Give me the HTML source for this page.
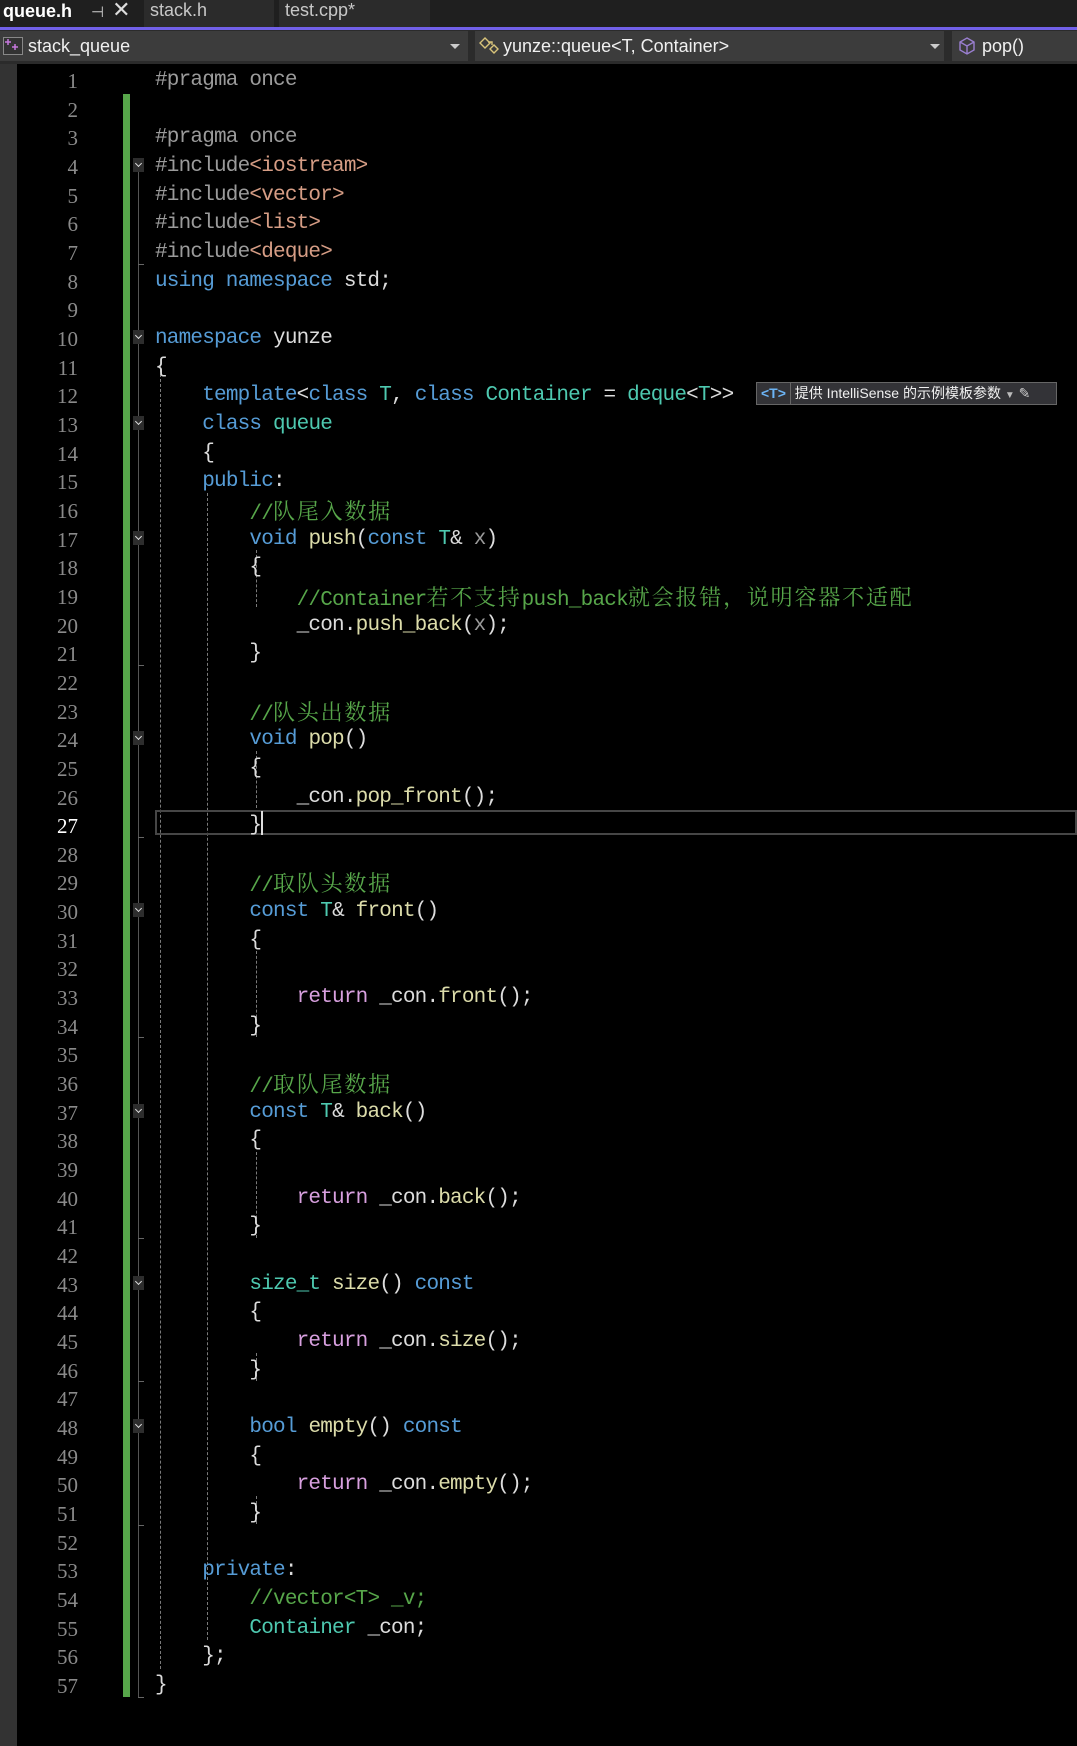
<!DOCTYPE html>
<html><head><meta charset="utf-8"><style>
*{margin:0;padding:0;box-sizing:border-box}
body{width:1077px;height:1746px;background:#000;position:relative;overflow:hidden;font-family:"Liberation Sans","Noto Sans CJK SC",sans-serif}
.abs{position:absolute}
#tabs{left:0;top:0;width:1077px;height:27px;background:#1f1f1f}
.tab{position:absolute;top:0;height:27px;font-size:18px;color:#c8c8c8;line-height:20px;padding-left:6px}
#purple{left:0;top:27px;width:1077px;height:3px;background:#7160e8}
#nav{left:0;top:30px;width:1077px;height:34px;background:#2b2b2b}
.dd{position:absolute;top:1px;height:30px;background:#3c3c3c;color:#f0f0f0;font-size:18px;line-height:30px}
.arr{position:absolute;top:13px;width:0;height:0;border-left:5px solid transparent;border-right:5px solid transparent;border-top:5px solid #ccc}
#strip{left:0;top:64px;width:17px;height:1682px;background:#333}
#code{left:0;top:67px;width:1077px}
.ln{position:absolute;left:17px;width:61px;text-align:right;font-family:"Liberation Serif","Noto Serif CJK SC",serif;font-size:21px;color:#8a8a8a;height:28.66px;line-height:28.66px}
.l{position:absolute;left:155px;white-space:pre;font-family:"Liberation Mono","Noto Serif CJK SC",monospace;font-size:21px;letter-spacing:-0.8px;color:#dcdcdc;height:28.66px;line-height:28.66px}
.c{font-family:"Noto Serif CJK SC","Noto Sans CJK SC",serif;font-size:22px;letter-spacing:1.8px}
.k{color:#569cd6}.t{color:#4ec9b0}.f{color:#dcdcaa}.cm{color:#57a64a}.s{color:#d69d85}.p{color:#9b9b9b}.r{color:#d8a0df}.g{color:#9a9a9a}
.fold{position:absolute;left:133px;width:11px;height:14px;background:#2d2d2d}
.fold:after{content:"";position:absolute;left:3px;top:3px;width:4px;height:4px;border-right:1.5px solid #ddd;border-bottom:1.5px solid #ddd;transform:rotate(45deg)}
.vg{position:absolute;width:0;border-left:1px dashed #7a7a7a}
.tick{position:absolute;left:138px;width:6px;height:1px;background:#666}
</style></head><body>
<div id="tabs" class="abs">
 <div class="tab" style="left:0;width:142px;background:#1f1f1f;color:#fff;font-weight:bold;padding-left:3px">queue.h <span style="font-weight:normal;color:#ccc;margin-left:14px;font-size:15px">⊣</span><span style="font-weight:normal;color:#ddd;margin-left:8px;font-size:22px">✕</span></div>
 <div class="tab" style="left:144px;width:130px;background:#2b2b2b">stack.h</div>
 <div class="tab" style="left:279px;width:151px;background:#2b2b2b">test.cpp*</div>
</div>
<div id="purple" class="abs"></div>
<div id="nav" class="abs">
 <div class="dd" style="left:0;width:468px;padding-left:28px">stack_queue
  <svg class="abs" style="left:3px;top:6px" width="20" height="18"><rect x="0.5" y="0.5" width="19" height="17" fill="#333" stroke="#888"/><path d="M5 2v6M2 5h6M12 7v6M9 10h6" stroke="#c678dd" stroke-width="1.5"/></svg>
  <div class="arr" style="left:450px"></div></div>
 <div class="dd" style="left:475px;width:469px;padding-left:28px">yunze::queue&lt;T, Container&gt;
  <svg class="abs" style="left:4px;top:6px" width="22" height="20"><path d="M1 6l5-5 5 5-5 5zM11 12l4-4 4 4-4 4z" fill="none" stroke="#d9c47a" stroke-width="1.4"/><path d="M9 5h4v3" fill="none" stroke="#d9c47a" stroke-width="1.4"/></svg>
  <div class="arr" style="left:455px"></div></div>
 <div class="dd" style="left:952px;width:125px;padding-left:30px">pop()
  <svg class="abs" style="left:5px;top:5px" width="20" height="20"><path d="M10 2l7 4v8l-7 4-7-4V6zM3 6l7 4 7-4M10 10v8" fill="none" stroke="#9a7fd0" stroke-width="1.4"/></svg></div>
</div>
<div id="strip" class="abs"></div>
<div class="abs" style="left:123px;top:94px;width:7px;height:1603px;background:#57a64a"></div>
<div class="abs" style="left:138px;top:170px;width:1px;height:1527px;background:#555"></div>
<div class="vg" style="left:160px;top:364px;height:1305px"></div>
<div class="vg" style="left:207px;top:493px;height:1147px"></div>
<div class="vg" style="left:256px;top:550px;height:57px"></div>
<div class="vg" style="left:256px;top:751px;height:57px"></div>
<div class="vg" style="left:256px;top:951px;height:86px"></div>
<div class="vg" style="left:256px;top:1152px;height:86px"></div>
<div class="vg" style="left:256px;top:1353px;height:28px"></div>
<div class="vg" style="left:256px;top:1496px;height:28px"></div>
<div class="abs" style="left:155px;top:810px;width:922px;height:25px;border:2px solid #464646"></div>
<div class="abs" style="left:261px;top:811px;width:2px;height:24px;background:#ddd"></div>
<div class="abs" style="left:756px;top:382px;width:301px;height:23px;background:#333337;border:1px solid #666;font-size:14px;color:#f0f0f0;line-height:21px;white-space:nowrap"><span style="color:#6cb4f5;font-weight:bold;padding:0 4px;border-right:1px solid #666;display:inline-block">&lt;T&gt;</span> 提供 IntelliSense 的示例模板参数 <span style="color:#bbb;font-size:10px">▼</span> <span style="color:#ccc">✎</span></div>
<div id="code" class="abs">
<script>
var L=[
'<span class="p">#pragma once</span>','',
'<span class="p">#pragma once</span>',
'<span class="p">#include</span><span class="s">&lt;iostream&gt;</span>',
'<span class="p">#include</span><span class="s">&lt;vector&gt;</span>',
'<span class="p">#include</span><span class="s">&lt;list&gt;</span>',
'<span class="p">#include</span><span class="s">&lt;deque&gt;</span>',
'<span class="k">using namespace</span> std;','',
'<span class="k">namespace</span> yunze',
'{',
'    <span class="k">template</span>&lt;<span class="k">class</span> <span class="t">T</span>, <span class="k">class</span> <span class="t">Container</span> = <span class="t">deque</span>&lt;<span class="t">T</span>&gt;&gt;',
'    <span class="k">class</span> <span class="t">queue</span>',
'    {',
'    <span class="k">public</span>:',
'        <span class="cm">//<span class="c">队尾入数据</span></span>',
'        <span class="k">void</span> <span class="f">push</span>(<span class="k">const</span> <span class="t">T</span>&amp; <span class="g">x</span>)',
'        {',
'            <span class="cm">//Container<span class="c">若不支持</span>push_back<span class="c">就会报错，说明容器不适配</span></span>',
'            _con.<span class="f">push_back</span>(<span class="g">x</span>);',
'        }','',
'        <span class="cm">//<span class="c">队头出数据</span></span>',
'        <span class="k">void</span> <span class="f">pop</span>()',
'        {',
'            _con.<span class="f">pop_front</span>();',
'        }','',
'        <span class="cm">//<span class="c">取队头数据</span></span>',
'        <span class="k">const</span> <span class="t">T</span>&amp; <span class="f">front</span>()',
'        {','',
'            <span class="r">return</span> _con.<span class="f">front</span>();',
'        }','',
'        <span class="cm">//<span class="c">取队尾数据</span></span>',
'        <span class="k">const</span> <span class="t">T</span>&amp; <span class="f">back</span>()',
'        {','',
'            <span class="r">return</span> _con.<span class="f">back</span>();',
'        }','',
'        <span class="t">size_t</span> <span class="f">size</span>() <span class="k">const</span>',
'        {',
'            <span class="r">return</span> _con.<span class="f">size</span>();',
'        }','',
'        <span class="k">bool</span> <span class="f">empty</span>() <span class="k">const</span>',
'        {',
'            <span class="r">return</span> _con.<span class="f">empty</span>();',
'        }','',
'    <span class="k">private</span>:',
'        <span class="cm">//vector&lt;T&gt; _v;</span>',
'        <span class="t">Container</span> _con;',
'    };',
'}'];
var folds=[4,10,13,17,24,30,37,43,48],ticks=[7,21,27,34,41,46,51,57];
var h='';
for(var i=0;i<L.length;i++){var y=(i*28.66).toFixed(2);
h+='<div class="ln" style="top:'+y+'px'+(i==26?';color:#fff':'')+'">'+(i+1)+'</div>';
h+='<div class="l" style="top:'+y+'px">'+L[i]+'</div>';}
folds.forEach(function(n){h+='<div class="fold" style="top:'+((n-1)*28.66+5).toFixed(1)+'px"></div>';});
ticks.forEach(function(n){h+='<div class="tick" style="top:'+((n)*28.66-4).toFixed(1)+'px"></div>';});
document.write(h);
</script>
</div>
</body></html>
